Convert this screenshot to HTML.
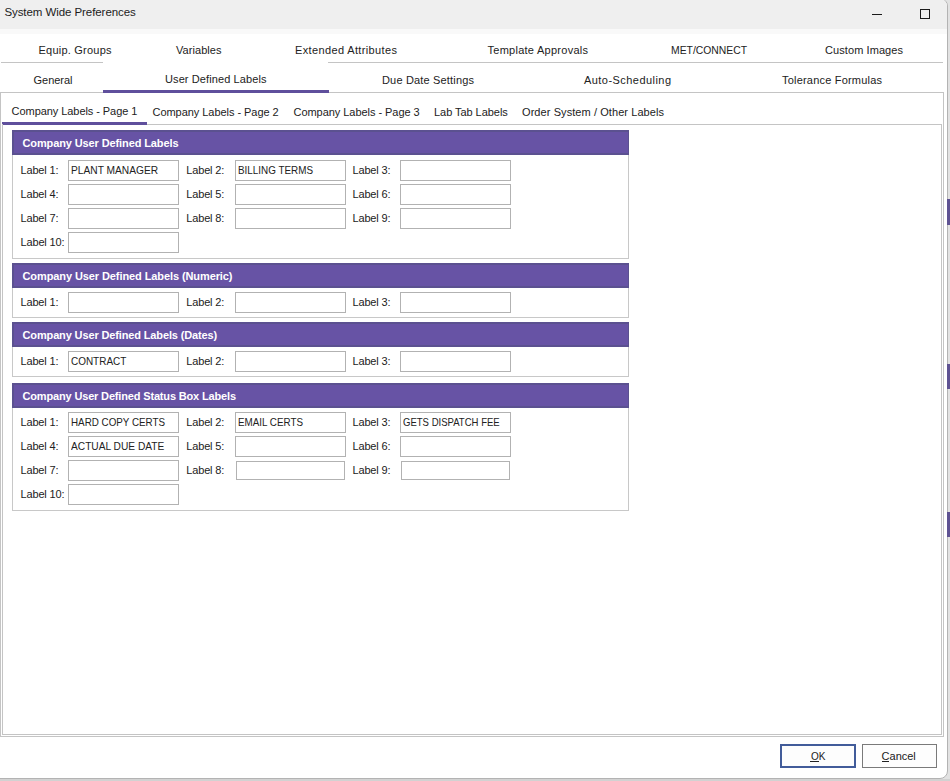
<!DOCTYPE html>
<html><head><meta charset="utf-8"><style>
html,body{margin:0;padding:0;width:950px;height:781px;overflow:hidden;background:#dedede}
body{position:relative;font-family:"Liberation Sans",sans-serif}
div{position:absolute}
.t{white-space:nowrap;-webkit-text-stroke:0}
.b{-webkit-text-stroke:0}
</style></head><body>
<div style="left:0px;top:0px;width:950px;height:781px;background:#e2e2e2"></div>
<div style="left:0px;top:779px;width:950px;height:2px;background:#d2d2d2"></div>
<div style="left:-10px;top:-2px;width:958px;height:781px;background:#ffffff;border:1px solid #b3b3b3;border-radius:8px;box-sizing:border-box"></div>
<div style="left:947px;top:199px;width:3px;height:26px;background:#5e5292"></div>
<div style="left:947px;top:364px;width:3px;height:25px;background:#5e5292"></div>
<div style="left:947px;top:512px;width:3px;height:25px;background:#5e5292"></div>
<div style="left:0px;top:-1px;width:947px;height:30px;background:#efefef;border-radius:0 7px 0 0"></div>
<div style="left:0px;top:29px;width:947px;height:5px;background:#f9f9f9"></div>
<div class="t" style="left:4.40px;top:7.27px;font-size:11.5px;line-height:11.5px;font-weight:normal;letter-spacing:-0.070px;color:#1c1c1c;">System Wide Preferences</div>
<div style="left:872px;top:14px;width:10px;height:1px;background:#1a1a1a"></div>
<div style="left:920px;top:9px;width:10px;height:10px;border:1px solid #1a1a1a;box-sizing:border-box"></div>
<div style="left:1px;top:62px;width:102px;height:1px;background:#c4c4c4"></div>
<div style="left:328px;top:62px;width:615px;height:1px;background:#c4c4c4"></div>
<div style="left:0px;top:92px;width:944px;height:1px;background:#c4c4c4"></div>
<div style="left:103px;top:90px;width:226px;height:3px;background:#5f4f9c"></div>
<div style="left:0px;top:92px;width:1px;height:645px;background:#c4c4c4"></div>
<div style="left:943px;top:92px;width:1px;height:645px;background:#c4c4c4"></div>
<div style="left:0px;top:736px;width:944px;height:1px;background:#c4c4c4"></div>
<div class="t" style="left:38.50px;top:44.69px;font-size:11px;line-height:11px;font-weight:normal;letter-spacing:0.224px;color:#222222;">Equip. Groups</div>
<div class="t" style="left:176.00px;top:44.69px;font-size:11px;line-height:11px;font-weight:normal;letter-spacing:0.057px;color:#222222;">Variables</div>
<div class="t" style="left:295.00px;top:44.69px;font-size:11px;line-height:11px;font-weight:normal;letter-spacing:0.367px;color:#222222;">Extended Attributes</div>
<div class="t" style="left:487.50px;top:44.69px;font-size:11px;line-height:11px;font-weight:normal;letter-spacing:0.265px;color:#222222;">Template Approvals</div>
<div class="t" style="left:671.00px;top:44.69px;font-size:11px;line-height:11px;font-weight:normal;letter-spacing:0.000px;color:#222222;transform:scaleX(0.9423);transform-origin:0.00px 0;">MET/CONNECT</div>
<div class="t" style="left:825.00px;top:44.69px;font-size:11px;line-height:11px;font-weight:normal;letter-spacing:0.081px;color:#222222;">Custom Images</div>
<div class="t" style="left:33.50px;top:74.69px;font-size:11px;line-height:11px;font-weight:normal;letter-spacing:-0.023px;color:#222222;">General</div>
<div class="t" style="left:165.00px;top:73.69px;font-size:11px;line-height:11px;font-weight:normal;letter-spacing:0.102px;color:#222222;">User Defined Labels</div>
<div class="t" style="left:382.00px;top:74.69px;font-size:11px;line-height:11px;font-weight:normal;letter-spacing:0.171px;color:#222222;">Due Date Settings</div>
<div class="t" style="left:584.00px;top:74.69px;font-size:11px;line-height:11px;font-weight:normal;letter-spacing:0.449px;color:#222222;">Auto-Scheduling</div>
<div class="t" style="left:782.00px;top:74.69px;font-size:11px;line-height:11px;font-weight:normal;letter-spacing:0.200px;color:#222222;">Tolerance Formulas</div>
<div style="left:2px;top:124px;width:940px;height:1px;background:#c4c4c4"></div>
<div style="left:2px;top:122px;width:145px;height:3px;background:#5f4f9c"></div>
<div style="left:2px;top:124px;width:1px;height:611px;background:#c4c4c4"></div>
<div style="left:941px;top:124px;width:1px;height:611px;background:#c4c4c4"></div>
<div style="left:2px;top:734px;width:940px;height:1px;background:#c4c4c4"></div>
<div class="t" style="left:11.60px;top:105.69px;font-size:11px;line-height:11px;font-weight:normal;letter-spacing:-0.063px;color:#222222;">Company Labels - Page 1</div>
<div class="t" style="left:152.50px;top:106.69px;font-size:11px;line-height:11px;font-weight:normal;letter-spacing:-0.045px;color:#222222;">Company Labels - Page 2</div>
<div class="t" style="left:293.50px;top:106.69px;font-size:11px;line-height:11px;font-weight:normal;letter-spacing:-0.045px;color:#222222;">Company Labels - Page 3</div>
<div class="t" style="left:434.00px;top:106.69px;font-size:11px;line-height:11px;font-weight:normal;letter-spacing:-0.048px;color:#222222;">Lab Tab Labels</div>
<div class="t" style="left:522.00px;top:106.69px;font-size:11px;line-height:11px;font-weight:normal;letter-spacing:0.077px;color:#222222;">Order System / Other Labels</div>
<div style="left:12px;top:130px;width:617px;height:129px;border:1px solid #c8c8c8;box-sizing:border-box;background:#fff"></div>
<div style="left:12px;top:130px;width:617px;height:25px;background:#6753a5;border:1px solid #5b5190;border-width:2px 1px 2px 2px;box-sizing:border-box"></div>
<div class="t b" style="left:22.50px;top:137.69px;font-size:11px;line-height:11px;font-weight:bold;letter-spacing:-0.113px;color:#ffffff;">Company User Defined Labels</div>
<div class="t" style="left:20.50px;top:164.69px;font-size:11px;line-height:11px;font-weight:normal;letter-spacing:-0.163px;color:#222222;">Label 1:</div>
<div style="left:68px;top:160px;width:111px;height:21px;border:1px solid #b2b2b2;box-sizing:border-box;background:#fff"></div>
<div class="t" style="left:70.60px;top:164.69px;font-size:11px;line-height:11px;font-weight:normal;letter-spacing:0.000px;color:#222222;transform:scaleX(0.9272);transform-origin:0.00px 0;">PLANT MANAGER</div>
<div class="t" style="left:186.30px;top:164.69px;font-size:11px;line-height:11px;font-weight:normal;letter-spacing:-0.163px;color:#222222;">Label 2:</div>
<div style="left:235px;top:160px;width:111px;height:21px;border:1px solid #b2b2b2;box-sizing:border-box;background:#fff"></div>
<div class="t" style="left:237.60px;top:164.69px;font-size:11px;line-height:11px;font-weight:normal;letter-spacing:0.000px;color:#222222;transform:scaleX(0.8977);transform-origin:0.00px 0;">BILLING TERMS</div>
<div class="t" style="left:352.50px;top:164.69px;font-size:11px;line-height:11px;font-weight:normal;letter-spacing:-0.163px;color:#222222;">Label 3:</div>
<div style="left:400px;top:160px;width:111px;height:21px;border:1px solid #b2b2b2;box-sizing:border-box;background:#fff"></div>
<div class="t" style="left:20.50px;top:188.69px;font-size:11px;line-height:11px;font-weight:normal;letter-spacing:-0.163px;color:#222222;">Label 4:</div>
<div style="left:68px;top:184px;width:111px;height:21px;border:1px solid #b2b2b2;box-sizing:border-box;background:#fff"></div>
<div class="t" style="left:186.30px;top:188.69px;font-size:11px;line-height:11px;font-weight:normal;letter-spacing:-0.163px;color:#222222;">Label 5:</div>
<div style="left:235px;top:184px;width:111px;height:21px;border:1px solid #b2b2b2;box-sizing:border-box;background:#fff"></div>
<div class="t" style="left:352.50px;top:188.69px;font-size:11px;line-height:11px;font-weight:normal;letter-spacing:-0.163px;color:#222222;">Label 6:</div>
<div style="left:400px;top:184px;width:111px;height:21px;border:1px solid #b2b2b2;box-sizing:border-box;background:#fff"></div>
<div class="t" style="left:20.50px;top:212.69px;font-size:11px;line-height:11px;font-weight:normal;letter-spacing:-0.163px;color:#222222;">Label 7:</div>
<div style="left:68px;top:208px;width:111px;height:21px;border:1px solid #b2b2b2;box-sizing:border-box;background:#fff"></div>
<div class="t" style="left:186.30px;top:212.69px;font-size:11px;line-height:11px;font-weight:normal;letter-spacing:-0.163px;color:#222222;">Label 8:</div>
<div style="left:235px;top:208px;width:111px;height:21px;border:1px solid #b2b2b2;box-sizing:border-box;background:#fff"></div>
<div class="t" style="left:352.50px;top:212.69px;font-size:11px;line-height:11px;font-weight:normal;letter-spacing:-0.163px;color:#222222;">Label 9:</div>
<div style="left:400px;top:208px;width:111px;height:21px;border:1px solid #b2b2b2;box-sizing:border-box;background:#fff"></div>
<div class="t" style="left:20.50px;top:236.69px;font-size:11px;line-height:11px;font-weight:normal;letter-spacing:-0.158px;color:#222222;">Label 10:</div>
<div style="left:68px;top:232px;width:111px;height:21px;border:1px solid #b2b2b2;box-sizing:border-box;background:#fff"></div>
<div style="left:12px;top:263px;width:617px;height:55px;border:1px solid #c8c8c8;box-sizing:border-box;background:#fff"></div>
<div style="left:12px;top:263px;width:617px;height:25px;background:#6753a5;border:1px solid #5b5190;border-width:2px 1px 2px 2px;box-sizing:border-box"></div>
<div class="t b" style="left:22.50px;top:270.69px;font-size:11px;line-height:11px;font-weight:bold;letter-spacing:-0.092px;color:#ffffff;">Company User Defined Labels (Numeric)</div>
<div class="t" style="left:20.50px;top:296.69px;font-size:11px;line-height:11px;font-weight:normal;letter-spacing:-0.163px;color:#222222;">Label 1:</div>
<div style="left:68px;top:292px;width:111px;height:21px;border:1px solid #b2b2b2;box-sizing:border-box;background:#fff"></div>
<div class="t" style="left:186.30px;top:296.69px;font-size:11px;line-height:11px;font-weight:normal;letter-spacing:-0.163px;color:#222222;">Label 2:</div>
<div style="left:235px;top:292px;width:111px;height:21px;border:1px solid #b2b2b2;box-sizing:border-box;background:#fff"></div>
<div class="t" style="left:352.50px;top:296.69px;font-size:11px;line-height:11px;font-weight:normal;letter-spacing:-0.163px;color:#222222;">Label 3:</div>
<div style="left:400px;top:292px;width:111px;height:21px;border:1px solid #b2b2b2;box-sizing:border-box;background:#fff"></div>
<div style="left:12px;top:322px;width:617px;height:55px;border:1px solid #c8c8c8;box-sizing:border-box;background:#fff"></div>
<div style="left:12px;top:322px;width:617px;height:25px;background:#6753a5;border:1px solid #5b5190;border-width:2px 1px 2px 2px;box-sizing:border-box"></div>
<div class="t b" style="left:22.50px;top:329.69px;font-size:11px;line-height:11px;font-weight:bold;letter-spacing:-0.134px;color:#ffffff;">Company User Defined Labels (Dates)</div>
<div class="t" style="left:20.50px;top:355.69px;font-size:11px;line-height:11px;font-weight:normal;letter-spacing:-0.163px;color:#222222;">Label 1:</div>
<div style="left:68px;top:351px;width:111px;height:21px;border:1px solid #b2b2b2;box-sizing:border-box;background:#fff"></div>
<div class="t" style="left:70.60px;top:355.69px;font-size:11px;line-height:11px;font-weight:normal;letter-spacing:0.000px;color:#222222;transform:scaleX(0.9049);transform-origin:0.00px 0;">CONTRACT</div>
<div class="t" style="left:186.30px;top:355.69px;font-size:11px;line-height:11px;font-weight:normal;letter-spacing:-0.163px;color:#222222;">Label 2:</div>
<div style="left:235px;top:351px;width:111px;height:21px;border:1px solid #b2b2b2;box-sizing:border-box;background:#fff"></div>
<div class="t" style="left:352.50px;top:355.69px;font-size:11px;line-height:11px;font-weight:normal;letter-spacing:-0.163px;color:#222222;">Label 3:</div>
<div style="left:400px;top:351px;width:111px;height:21px;border:1px solid #b2b2b2;box-sizing:border-box;background:#fff"></div>
<div style="left:12px;top:383px;width:617px;height:128px;border:1px solid #c8c8c8;box-sizing:border-box;background:#fff"></div>
<div style="left:12px;top:383px;width:617px;height:25px;background:#6753a5;border:1px solid #5b5190;border-width:2px 1px 2px 2px;box-sizing:border-box"></div>
<div class="t b" style="left:22.50px;top:390.69px;font-size:11px;line-height:11px;font-weight:bold;letter-spacing:-0.160px;color:#ffffff;">Company User Defined Status Box Labels</div>
<div class="t" style="left:20.50px;top:416.69px;font-size:11px;line-height:11px;font-weight:normal;letter-spacing:-0.163px;color:#222222;">Label 1:</div>
<div style="left:68px;top:412px;width:111px;height:21px;border:1px solid #b2b2b2;box-sizing:border-box;background:#fff"></div>
<div class="t" style="left:70.60px;top:416.69px;font-size:11px;line-height:11px;font-weight:normal;letter-spacing:0.000px;color:#222222;transform:scaleX(0.8923);transform-origin:0.00px 0;">HARD COPY CERTS</div>
<div class="t" style="left:186.30px;top:416.69px;font-size:11px;line-height:11px;font-weight:normal;letter-spacing:-0.163px;color:#222222;">Label 2:</div>
<div style="left:235px;top:412px;width:111px;height:21px;border:1px solid #b2b2b2;box-sizing:border-box;background:#fff"></div>
<div class="t" style="left:237.60px;top:416.69px;font-size:11px;line-height:11px;font-weight:normal;letter-spacing:0.000px;color:#222222;transform:scaleX(0.8937);transform-origin:0.00px 0;">EMAIL CERTS</div>
<div class="t" style="left:352.50px;top:416.69px;font-size:11px;line-height:11px;font-weight:normal;letter-spacing:-0.163px;color:#222222;">Label 3:</div>
<div style="left:400px;top:412px;width:111px;height:21px;border:1px solid #b2b2b2;box-sizing:border-box;background:#fff"></div>
<div class="t" style="left:402.60px;top:416.69px;font-size:11px;line-height:11px;font-weight:normal;letter-spacing:0.000px;color:#222222;transform:scaleX(0.8678);transform-origin:0.00px 0;">GETS DISPATCH FEE</div>
<div class="t" style="left:20.50px;top:440.69px;font-size:11px;line-height:11px;font-weight:normal;letter-spacing:-0.163px;color:#222222;">Label 4:</div>
<div style="left:68px;top:436px;width:111px;height:21px;border:1px solid #b2b2b2;box-sizing:border-box;background:#fff"></div>
<div class="t" style="left:70.60px;top:440.69px;font-size:11px;line-height:11px;font-weight:normal;letter-spacing:0.000px;color:#222222;transform:scaleX(0.9252);transform-origin:0.00px 0;">ACTUAL DUE DATE</div>
<div class="t" style="left:186.30px;top:440.69px;font-size:11px;line-height:11px;font-weight:normal;letter-spacing:-0.163px;color:#222222;">Label 5:</div>
<div style="left:235px;top:436px;width:111px;height:21px;border:1px solid #b2b2b2;box-sizing:border-box;background:#fff"></div>
<div class="t" style="left:352.50px;top:440.69px;font-size:11px;line-height:11px;font-weight:normal;letter-spacing:-0.163px;color:#222222;">Label 6:</div>
<div style="left:400px;top:436px;width:111px;height:21px;border:1px solid #b2b2b2;box-sizing:border-box;background:#fff"></div>
<div class="t" style="left:20.50px;top:464.69px;font-size:11px;line-height:11px;font-weight:normal;letter-spacing:-0.163px;color:#222222;">Label 7:</div>
<div style="left:68px;top:460px;width:111px;height:21px;border:1px solid #b2b2b2;box-sizing:border-box;background:#fff"></div>
<div class="t" style="left:186.30px;top:464.69px;font-size:11px;line-height:11px;font-weight:normal;letter-spacing:-0.163px;color:#222222;">Label 8:</div>
<div style="left:236px;top:461px;width:109px;height:19px;border:1px solid #b2b2b2;box-sizing:border-box;background:#fff"></div>
<div class="t" style="left:352.50px;top:464.69px;font-size:11px;line-height:11px;font-weight:normal;letter-spacing:-0.163px;color:#222222;">Label 9:</div>
<div style="left:401px;top:461px;width:109px;height:19px;border:1px solid #b2b2b2;box-sizing:border-box;background:#fff"></div>
<div class="t" style="left:20.50px;top:488.69px;font-size:11px;line-height:11px;font-weight:normal;letter-spacing:-0.158px;color:#222222;">Label 10:</div>
<div style="left:68px;top:484px;width:111px;height:21px;border:1px solid #b2b2b2;box-sizing:border-box;background:#fff"></div>
<div style="left:780px;top:744px;width:76px;height:24px;border:2px solid #425c9a;box-sizing:border-box;background:#fdfdfd"></div>
<div class="t" style="left:810.50px;top:750.69px;font-size:11px;line-height:11px;font-weight:normal;letter-spacing:0.000px;color:#222222;transform:scaleX(0.9125);transform-origin:0.00px 0;">OK</div>
<div style="left:810px;top:761px;width:9px;height:1px;background:#222"></div>
<div style="left:862px;top:744px;width:75px;height:24px;border:1px solid #7a7a7a;box-sizing:border-box;background:#fdfdfd"></div>
<div class="t" style="left:881.60px;top:750.69px;font-size:11px;line-height:11px;font-weight:normal;letter-spacing:-0.007px;color:#222222;">Cancel</div>
<div style="left:882px;top:761px;width:7px;height:1px;background:#222"></div>
</body></html>
